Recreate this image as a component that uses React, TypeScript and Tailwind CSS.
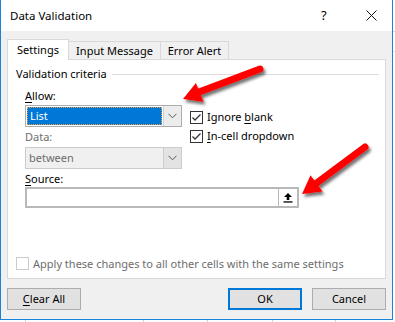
import React from "react";

const font = { fontFamily: '"Noto Sans", "Liberation Sans", sans-serif' };

const Check: React.FC<{ checked?: boolean; disabled?: boolean }> = ({ checked, disabled }) => (
  <span
    className={`inline-flex w-[13px] h-[13px] items-center justify-center border bg-white ${
      disabled ? "border-[#cccccc]" : "border-[#333333]"
    }`}
  >
    {checked && (
      <svg width="11" height="11" viewBox="0 0 11 11">
        <path d="M1.5 5.5 L4 8 L9.5 2.5" fill="none" stroke="#333" strokeWidth="1.3" />
      </svg>
    )}
  </span>
);

const Chevron: React.FC = () => (
  <svg width="9" height="6" viewBox="0 0 9 6">
    <path d="M0.5 0.8 L4.5 4.8 L8.5 0.8" fill="none" stroke="#555" strokeWidth="1" />
  </svg>
);

const Arrows: React.FC = () => (
  <svg className="absolute inset-0 pointer-events-none" width="395" height="322" viewBox="0 0 395 322">
    <defs>
      <filter id="sh" x="-20%" y="-20%" width="140%" height="140%">
        <feDropShadow dx="2" dy="3" stdDeviation="1.6" floodColor="#000" floodOpacity="0.55" />
      </filter>
    </defs>
    <g filter="url(#sh)">
      <line x1="199" y1="92" x2="260" y2="69" stroke="#ff0000" strokeWidth="7" strokeLinecap="round" />
      <polygon points="183,99 203.5,101.8 195.9,83" fill="#ff0000" />
    </g>
    <g filter="url(#sh)">
      <line x1="316" y1="183.5" x2="365" y2="147" stroke="#ff0000" strokeWidth="7" strokeLinecap="round" />
      <polygon points="302,194 322.5,191.5 310.5,175.2" fill="#ff0000" />
    </g>
  </svg>
);

export default function App() {
  return (
    <div className="relative w-[395px] h-[322px] bg-white overflow-hidden text-[11px] text-black" style={font}>
      <div className="flex h-[320px]">
        {/* dialog */}
        <div className="w-[393px] h-[320px] flex flex-col border-l border-r border-b border-[#1883d7]">
          {/* title bar */}
          <div className="h-[31px] bg-white flex items-center pl-[9px] shrink-0 text-[11.5px]">
            <span className="flex-1">Data Validation</span>
            <span className="w-[10px] text-[13px] mr-[35px]">?</span>
            <svg width="11" height="11" viewBox="0 0 11 11" className="mr-[15px]">
              <path d="M0.5 0.5 L10.5 10.5 M10.5 0.5 L0.5 10.5" stroke="#111" strokeWidth="1" />
            </svg>
          </div>

          {/* body */}
          <div className="flex-1 bg-[#f0f0f0] flex flex-col px-[6px] pt-[8px]">
            {/* tabs */}
            <div className="flex items-end h-[21px] relative z-10">
              <div className="h-[21px] w-[62px] bg-white border border-b-0 border-[#d9d9d9] flex items-center justify-center">
                Settings
              </div>
              <div className="h-[19px] w-[92px] border-t border-r border-[#d9d9d9] flex items-center justify-center">
                Input Message
              </div>
              <div className="h-[19px] w-[68px] border-t border-r border-[#d9d9d9] flex items-center justify-center">
                Error Alert
              </div>
            </div>

            {/* panel */}
            <div className="h-[220px] w-[379px] bg-white border border-[#d9d9d9] -mt-px flex flex-col pl-[8px] pr-[6px]">
              <div className="flex items-center gap-[5px] mt-[6px] h-[17px]">
                <span>Validation criteria</span>
                <div className="flex-1 h-px bg-[#dcdcdc]" />
              </div>

              <div className="flex pl-[9px] mt-[4px]">
                <div className="w-[157px] flex flex-col">
                  <div className="h-[17px] leading-[17px]">
                    <span className="underline underline-offset-2">A</span>llow:
                  </div>
                  <div className="h-[22px] mt-[1px] border border-[#adadad] bg-white flex">
                    <div className="flex-1 m-px border border-dotted border-[#e6a040] bg-[#0078d7] text-white flex items-center pl-[2px]">
                      List
                    </div>
                    <div className="w-[18px] bg-[#ececec] border-l border-[#d0d0d0] flex items-center justify-center">
                      <Chevron />
                    </div>
                  </div>
                  <div className="h-[17px] leading-[17px] mt-[1px] text-[#6d6d6d]">Data:</div>
                  <div className="h-[22px] mt-[2px] border border-[#cccccc] bg-[#f0f0f0] flex">
                    <div className="flex-1 text-[#6d6d6d] flex items-center pl-[3px]">between</div>
                    <div className="w-[18px] bg-[#e3e3e3] border-l border-[#cccccc] flex items-center justify-center">
                      <Chevron />
                    </div>
                  </div>
                </div>
                <div className="flex flex-col ml-[8px] mt-[23px] gap-[5px]">
                  <div className="flex items-center gap-[4px] h-[14px]">
                    <Check checked />
                    <span>
                      Ignore <span className="underline underline-offset-2">b</span>lank
                    </span>
                  </div>
                  <div className="flex items-center gap-[4px] h-[14px]">
                    <Check checked />
                    <span>
                      <span className="underline underline-offset-2">I</span>n-cell dropdown
                    </span>
                  </div>
                </div>
              </div>

              <div className="pl-[9px] mt-[1px]">
                <div className="h-[17px] leading-[17px]">
                  <span className="underline underline-offset-2">S</span>ource:
                </div>
                <div className="w-[274px] h-[21px] border-2 border-[#b9b9b9] bg-white flex justify-end">
                  <div className="w-[19px] h-[17px] border-l border-[#b9b9b9] bg-white flex items-center justify-center">
                    <svg width="10" height="11" viewBox="0 0 10 11">
                      <path d="M5 1 L9 5 L6.3 5 L6.3 8 L3.7 8 L3.7 5 L1 5 Z" fill="#000" />
                      <rect x="0.5" y="9.3" width="9" height="1.3" fill="#000" />
                    </svg>
                  </div>
                </div>
              </div>

              <div className="flex-1" />
              <div className="flex items-center gap-[4px] mb-[6px] text-[#6d6d6d]">
                <Check disabled />
                <span>Apply these changes to all other cells with the same settings</span>
              </div>
            </div>

            {/* buttons */}
            <div className="flex mt-[9px]">
              <button className="w-[74px] h-[22px] bg-[#e1e1e1] border border-[#adadad]">
                <span className="underline underline-offset-2">C</span>lear All
              </button>
              <div className="flex-1" />
              <button className="w-[74px] h-[22px] bg-[#e1e1e1] border-2 border-[#0078d7]">OK</button>
              <button className="w-[74px] h-[22px] ml-[10px] bg-[#e1e1e1] border border-[#adadad]">Cancel</button>
            </div>
          </div>
        </div>
        {/* sheet behind, right */}
        <div className="flex-1 flex flex-col">
          <div className="h-[32px] border-b border-[#d4d4d4]" />
          <div className="h-[20px] border-b border-[#e2e2e2]" />
        </div>
      </div>
      {/* sheet behind, bottom */}
      <div className="flex h-[2px]">
        <div className="w-[25px]" />
        <div className="w-[118px] border-l border-[#d4d4d4]" />
        <div className="w-[64px] border-l border-[#d4d4d4]" />
        <div className="w-[65px] border-l border-[#d4d4d4]" />
        <div className="w-[63px] border-l border-[#d4d4d4]" />
        <div className="flex-1 border-l border-[#d4d4d4]" />
      </div>

      <Arrows />
    </div>
  );
}
